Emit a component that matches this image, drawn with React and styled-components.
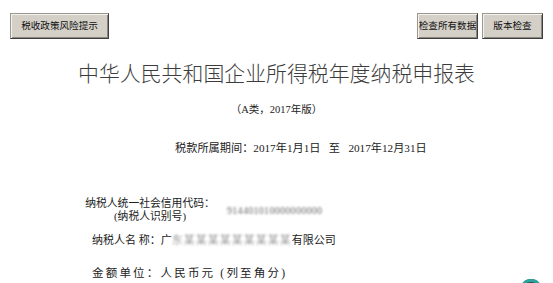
import React from "react";
import styled, { createGlobalStyle } from "styled-components";

const Global = createGlobalStyle`
  html, body { margin: 0; padding: 0; background: #fff; }
  body {
    font-family: "Liberation Serif", "Noto Sans CJK SC", serif;
    color: #222;
    width: 553px;
    height: 283px;
    overflow: hidden;
  }
`;

const Page = styled.div`
  position: relative;
  width: 553px;
  height: 283px;
  overflow: hidden;
`;

const Toolbar = styled.div`
  display: flex;
  justify-content: space-between;
  align-items: flex-start;
  padding: 13px 10px 0 10px;
`;

const ButtonGroup = styled.div`
  display: flex;
  gap: 4px;
`;

const ToolButton = styled.button`
  box-sizing: border-box;
  height: 26px;
  width: ${(p) => p.$w}px;
  padding: 0;
  background: #d4d0c8;
  border: 1px solid;
  border-color: #9a978f #3f3f3f #3f3f3f #9a978f;
  box-shadow: inset 1px 1px 0 #f4f2ee, inset -1px -1px 0 #8a877f;
  font-family: "Liberation Serif", "Noto Sans CJK SC", serif;
  font-size: 9.6px;
  color: #111;
  line-height: 24px;
  text-align: center;
  white-space: nowrap;
`;

const Title = styled.h1`
  margin: 23px 0 0 0;
  font-family: "Liberation Serif", "Noto Sans CJK SC", serif;
  font-weight: 300;
  font-size: 20.9px;
  line-height: 24px;
  color: #3c3c3c;
  text-align: center;
`;

const Subtitle = styled.div`
  margin-top: 17px;
  font-size: 10.5px;
  line-height: 14px;
  text-align: center;
  color: #222;
`;

const Period = styled.div`
  margin: 24px 0 0 175px;
  font-size: 11.2px;
  line-height: 14px;
  color: #222;
  white-space: pre;
`;

const Info = styled.div`
  margin: 42px 0 0 85px;
  display: flex;
  flex-direction: column;
`;

const CodeRow = styled.div`
  display: flex;
  align-items: center;
  gap: 12px;
`;

const CodeLabel = styled.div`
  width: 130px;
  text-align: center;
  font-size: 10.8px;
  line-height: 13px;
  color: #222;
  white-space: nowrap;
`;

const Blurred = styled.span`
  display: inline-block;
  color: ${(p) => p.$c || "#8d8d8d"};
  filter: blur(1.3px);
  letter-spacing: ${(p) => p.$ls || 0}px;
  font-size: ${(p) => p.$fs || 11}px;
`;

const Line = styled.div`
  margin-top: ${(p) => p.$mt}px;
  padding-left: 7px;
  font-size: ${(p) => p.$fs}px;
  letter-spacing: ${(p) => p.$ls || 0}px;
  line-height: 14px;
  color: #222;
  white-space: pre;
`;

const Floating = styled.div`
  position: absolute;
  left: 520px;
  top: 279px;
  width: 22px;
  height: 22px;
  border-radius: 50%;
  background: #3e4a4c;
  box-shadow: inset 0 3px 0 #2aa6a0;
`;

export default function App() {
  return (
    <Page>
      <Global />
      <Toolbar>
        <ToolButton $w={99}>税收政策风险提示</ToolButton>
        <ButtonGroup>
          <ToolButton $w={61}>检查所有数据</ToolButton>
          <ToolButton $w={61}>版本检查</ToolButton>
        </ButtonGroup>
      </Toolbar>
      <Title>中华人民共和国企业所得税年度纳税申报表</Title>
      <Subtitle>（A类，2017年版）</Subtitle>
      <Period>{"税款所属期间：2017年1月1日   至   2017年12月31日"}</Period>
      <Info>
        <CodeRow>
          <CodeLabel>
            纳税人统一社会信用代码：
            <br />
            (纳税人识别号)
          </CodeLabel>
          <Blurred $fs={10} $ls={0.3} $c="#666">914401010000000000</Blurred>
        </CodeRow>
        <Line $mt={10} $fs={11}>
          纳税人名 称：广<Blurred $ls={1} $c="#999">东某某某某某某某某某</Blurred>有限公司
        </Line>
        <Line $mt={19} $fs={11.5} $ls={2.2}>{"金额单位：人民币元 (列至角分)"}</Line>
      </Info>
      <Floating />
    </Page>
  );
}
